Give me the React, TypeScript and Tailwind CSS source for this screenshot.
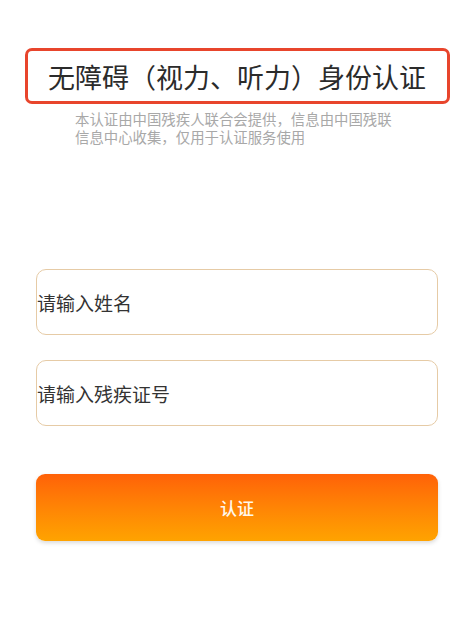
export default function App() {
  const font = { fontFamily: '"Noto Sans CJK SC", "Noto Sans", sans-serif' };
  return (
    <div className="min-h-[637px] w-[474px] bg-white" style={font}>
      <div className="pt-[48px] flex flex-col items-center">
        <div className="w-[425px] h-[56px] border-[3px] border-[#e8452c] rounded-[7px] flex items-center justify-center">
          <span className="text-[27px] leading-none text-[#2b2b2b] whitespace-nowrap">无障碍（视力、听力）身份认证</span>
        </div>
        <p className="mt-[6px] self-start ml-[75px] w-[322px] text-[14.4px] leading-[18px] text-[#a8a8a8]">
          本认证由中国残疾人联合会提供，信息由中国残联信息中心收集，仅用于认证服务使用
        </p>
      </div>
      <div className="mt-[123px] px-[36px] flex flex-col gap-[25px]">
        <div className="h-[66px] border border-[#e6cba6] rounded-[10px] flex items-center">
          <span className="text-[19px] text-[#333] leading-none">请输入姓名</span>
        </div>
        <div className="h-[66px] border border-[#e6cba6] rounded-[10px] flex items-center">
          <span className="text-[19px] text-[#333] leading-none">请输入残疾证号</span>
        </div>
      </div>
      <div className="mt-[48px] px-[36px]">
        <button className="w-full h-[67px] rounded-[9px] bg-gradient-to-b from-[#ff6108] to-[#ffa300] shadow-[0_2px_4px_rgba(0,0,0,0.15)] flex items-center justify-center text-[17px] font-medium text-[#fff8ec]">
          认证
        </button>
      </div>
    </div>
  );
}
